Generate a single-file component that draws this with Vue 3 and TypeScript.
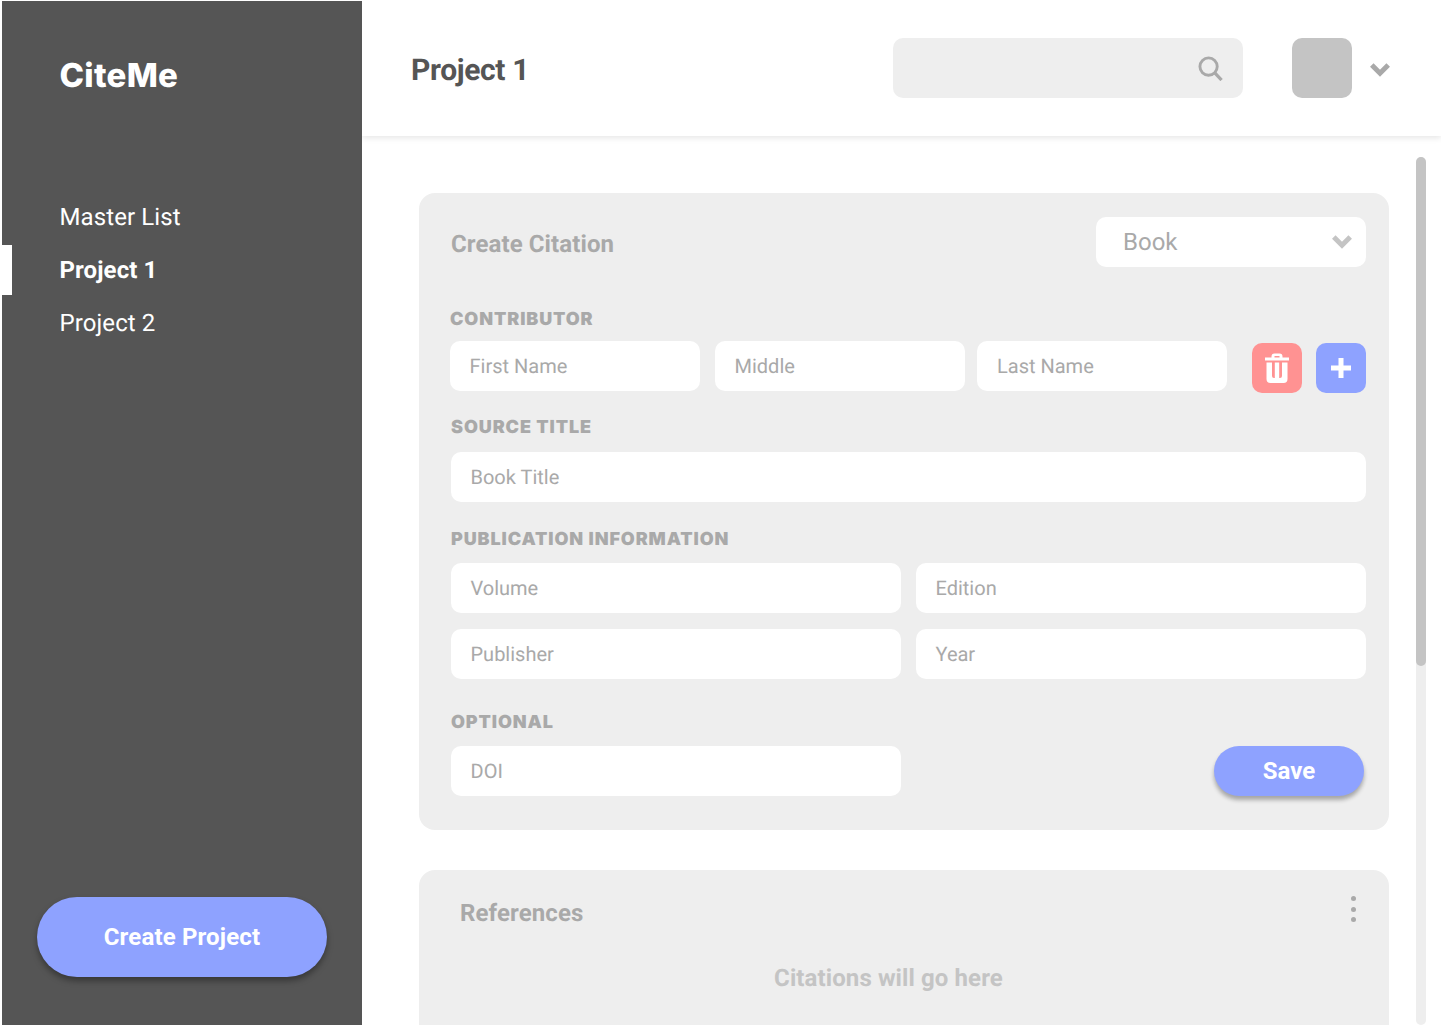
<script setup lang="ts">
const navItems = [
  { label: 'Master List', active: false },
  { label: 'Project 1', active: true },
  { label: 'Project 2', active: false },
]
</script>

<template>
  <div class="app">
    <aside class="sidebar">
      <div class="logo">CiteMe</div>
      <nav class="nav">
        <a v-for="item in navItems" :key="item.label" class="nav-item" :class="{ active: item.active }">
          {{ item.label }}
        </a>
      </nav>
      <button class="create-btn">Create Project</button>
    </aside>

    <div class="main">
      <header class="topbar">
        <h1 class="page-title">Project 1</h1>
        <div class="search">
          <svg class="search-icon" viewBox="0 0 26 26" fill="none" stroke="#a9a9a9" stroke-width="3">
            <circle cx="11" cy="11" r="9" />
            <path d="M17 17 L24.5 25" stroke-width="3.4" />
          </svg>
        </div>
        <div class="avatar"></div>
        <svg class="chevron user-chevron" viewBox="0 0 20 14" fill="none" stroke="#a9a9a9" stroke-width="5">
          <path d="M1.8 2 L10 10.2 L18.2 2" />
        </svg>
      </header>

      <div class="content">
        <div class="scrollbar"><div class="thumb"></div></div>

        <section class="card citation">
          <div class="card-head">
            <h2 class="card-title">Create Citation</h2>
            <div class="select">
              <span>Book</span>
              <svg class="chevron" viewBox="0 0 20 14" fill="none" stroke="#c4c4c4" stroke-width="5">
                <path d="M1.8 2 L10 10.2 L18.2 2" />
              </svg>
            </div>
          </div>

          <div class="label first">CONTRIBUTOR</div>
          <div class="row name-row">
            <div class="field w250">First Name</div>
            <div class="field w250">Middle</div>
            <div class="field w250">Last Name</div>
            <button class="icon-btn trash">
              <svg viewBox="0 0 24 30" width="24" height="30" fill="#fff">
                <path d="M6.5 3.5 Q6.5 0.5 9.5 0.5 H14.5 Q17.5 0.5 17.5 3.5 V4.5 H24 V7.5 H0 V4.5 H6.5 Z M9.5 3 V4.5 H14.5 V3 Z" fill-rule="evenodd" />
                <path d="M1.5 9.5 H7 V23 Q7 25 9 25 H9.8 V9.5 H14.2 V25 H15 Q17 25 17 23 V9.5 H22.5 V26 Q22.5 30 18.5 30 H5.5 Q1.5 30 1.5 26 Z" />
              </svg>
            </button>
            <button class="icon-btn plus">
              <svg viewBox="0 0 20 20" width="20" height="20" fill="#fff">
                <path d="M7.5 0 H12.5 V7.5 H20 V12.5 H12.5 V20 H7.5 V12.5 H0 V7.5 H7.5 Z" />
              </svg>
            </button>
          </div>

          <div class="label source">SOURCE TITLE</div>
          <div class="field">Book Title</div>

          <div class="label publication">PUBLICATION INFORMATION</div>
          <div class="grid">
            <div class="field">Volume</div>
            <div class="field">Edition</div>
            <div class="field">Publisher</div>
            <div class="field">Year</div>
          </div>

          <div class="label optional">OPTIONAL</div>
          <div class="row save-row">
            <div class="field w450">DOI</div>
            <button class="save-btn">Save</button>
          </div>
        </section>

        <section class="card references">
          <div class="ref-head">
            <h2 class="card-title">References</h2>
            <div class="dots"><i></i><i></i><i></i></div>
          </div>
          <p class="empty">Citations will go here</p>
        </section>
      </div>
    </div>
  </div>
</template>

<style>
html, body {
  margin: 0;
  background: #fff;
  overflow: hidden;
}
</style>

<style scoped>
.app {
  display: flex;
  width: 1441px;
  height: 1025px;
  overflow: hidden;
  background: #fff;
  font-family: Roboto, "Liberation Sans", sans-serif;
  text-rendering: geometricPrecision;
}

.sidebar {
  position: relative;
  z-index: 2;
  display: flex;
  flex-direction: column;
  flex: none;
  box-sizing: border-box;
  width: 360px;
  height: 1024px;
  margin: 1px 0 0 2px;
  padding: 0 0 48px;
  background: #555;
  color: #fff;
}

.logo {
  margin: 54px 0 0 57.5px;
  font-family: Inter, sans-serif;
  font-size: 33px;
  font-weight: 800;
  line-height: 40px;
  letter-spacing: 0.3px;
}

.nav {
  display: flex;
  flex-direction: column;
  margin-top: 96px;
}

.nav-item {
  position: relative;
  height: 53px;
  padding-left: 57.5px;
  font-size: 24px;
  line-height: 53px;
  letter-spacing: 0.1px;
}

.nav-item.active {
  font-weight: 700;
}

.nav-item.active::before {
  content: "";
  position: absolute;
  left: 0;
  top: 1px;
  width: 10px;
  height: 50px;
  background: #fff;
}

.create-btn {
  width: 290px;
  height: 80px;
  margin: auto 0 0 35px;
  border: 0;
  border-radius: 40px;
  background: #8ea2ff;
  box-shadow: 0 4px 6px rgba(0, 0, 0, 0.35);
  color: #fff;
  font: 700 24px Roboto, sans-serif;
  letter-spacing: 0.15px;
}

.main {
  display: flex;
  flex-direction: column;
  flex: 1;
  min-width: 0;
}

.topbar {
  position: relative;
  z-index: 1;
  display: flex;
  align-items: center;
  flex: none;
  box-sizing: border-box;
  height: 136px;
  padding: 0 59px 0 49px;
  background: #fff;
  box-shadow: 0 2px 6px rgba(0, 0, 0, 0.1);
}

.page-title {
  margin: 6px auto 0 0;
  color: #555;
  font-size: 30px;
  font-weight: 700;
  line-height: 40px;
  letter-spacing: -0.35px;
}

.search {
  display: flex;
  align-items: center;
  justify-content: flex-end;
  box-sizing: border-box;
  width: 350px;
  height: 60px;
  padding-right: 20px;
  border-radius: 10px;
  background: #eee;
}

.search-icon {
  width: 25px;
  height: 25px;
}

.avatar {
  width: 60px;
  height: 60px;
  margin-left: 49px;
  border-radius: 10px;
  background: #c4c4c4;
}

.chevron {
  display: block;
  width: 20px;
  height: 14px;
}

.user-chevron {
  margin: 3px -8px 0 18px;
}

.content {
  position: relative;
  flex: 1;
  min-height: 0;
  overflow: hidden;
  padding: 57px 0 0 57px;
}

.scrollbar {
  position: absolute;
  top: 21px;
  left: 1054px;
  bottom: 0;
  width: 10px;
  border-radius: 5px;
  background: #eee;
}

.thumb {
  height: 509px;
  border-radius: 5px;
  background: #c4c4c4;
}

.card {
  box-sizing: border-box;
  width: 970px;
  border-radius: 16px;
  background: #eee;
}

.citation {
  height: 637px;
  padding: 24px 23px 0 32px;
}

.card-head {
  display: flex;
  align-items: flex-start;
  justify-content: space-between;
  height: 56px;
}

.card-title {
  margin: 0;
  color: #a9a9a9;
  font-size: 24px;
  font-weight: 700;
  line-height: 55px;
  letter-spacing: 0.1px;
}

.select {
  display: flex;
  align-items: center;
  justify-content: space-between;
  box-sizing: border-box;
  width: 270px;
  height: 50px;
  padding: 0 14px 0 27px;
  border-radius: 10px;
  background: #fff;
  color: #a9a9a9;
  font-size: 24px;
}

.label {
  color: #a9a9a9;
  font-family: Inter, sans-serif;
  font-size: 18px;
  font-weight: 900;
  line-height: 24px;
  letter-spacing: 0.9px;
}

.label.first {
  margin: 35px 0 9.3px -1px;
}

.label.source {
  margin: 23.3px 0 12px;
}

.label.publication {
  margin: 25.3px 0 11.7px;
}

.label.optional {
  margin: 31.3px 0 11.7px;
}

.row {
  display: flex;
}

.name-row {
  align-items: flex-start;
  height: 51.7px;
  margin-left: -1px;
}

.name-row .field:nth-child(2) {
  margin-left: 15px;
}

.name-row .field:nth-child(3) {
  margin-left: 12px;
  padding-left: 20px;
}

.save-row {
  align-items: flex-start;
  justify-content: space-between;
}

.grid {
  display: grid;
  grid-template-columns: 450px 450px;
  column-gap: 15px;
  row-gap: 16px;
}

.field {
  box-sizing: border-box;
  height: 50px;
  padding-left: 19.5px;
  border-radius: 10px;
  background: #fff;
  color: #a9a9a9;
  font-size: 20px;
  line-height: 50px;
}

.w250 {
  width: 250px;
}

.w450 {
  width: 450px;
}

.icon-btn {
  display: flex;
  align-items: center;
  justify-content: center;
  flex: none;
  width: 50px;
  height: 50px;
  margin-top: 1.7px;
  padding: 0;
  border: 0;
  border-radius: 10px;
}

.trash {
  margin-left: 25px;
  background: #ff9292;
}

.plus {
  margin-left: 14px;
  background: #8ea2ff;
}

.save-btn {
  width: 150px;
  height: 50px;
  margin-right: 2px;
  border: 0;
  border-radius: 25px;
  background: #8ea2ff;
  box-shadow: 0 4px 4px rgba(0, 0, 0, 0.3);
  color: #fff;
  font: 700 24px Roboto, sans-serif;
}

.references {
  height: 300px;
  margin-top: 40px;
  padding: 16px 33px 0 41px;
}

.ref-head {
  display: flex;
  justify-content: space-between;
}

.dots {
  display: flex;
  flex-direction: column;
  gap: 5.5px;
  margin-top: 10px;
}

.dots i {
  display: block;
  width: 5px;
  height: 5px;
  border-radius: 50%;
  background: #a9a9a9;
}

.empty {
  margin: 23px 0 0 -39px;
  color: #c4c4c4;
  font-size: 24px;
  font-weight: 700;
  line-height: 28px;
  letter-spacing: 0.1px;
  text-align: center;
}
</style>
